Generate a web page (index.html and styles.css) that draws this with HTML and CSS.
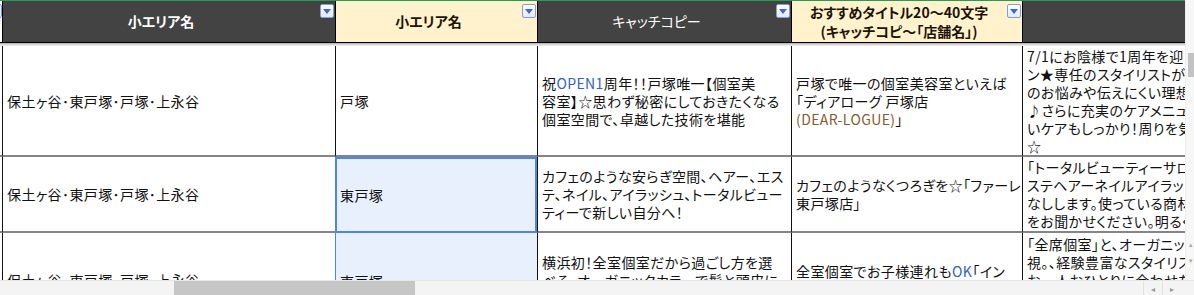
FILE: index.html
```html
<!DOCTYPE html>
<html lang="ja">
<head>
<meta charset="utf-8">
<title>小エリア一覧</title>
<link rel="stylesheet" href="styles.css">
</head>
<body>
<div class="app">
  <div class="main">
    <div class="viewport">
      <div class="strip">
        <div class="strip-cell"></div>
        <div class="strip-cell"><span class="ghost">ﾍﾟｰｼﾞ 設定 ｴﾘｱ</span></div>
        <div class="strip-cell"></div>
        <div class="strip-cell"></div>
        <div class="strip-cell"></div>
        <div class="strip-cell"></div>
      </div>
      <div class="green"></div>
      <div class="sheet">
        <div class="hd hd-edge"><span class="edge-btn"></span></div>
        <div class="hd hd-dark"><span class="hd-text bold">小エリア名</span><span class="dd"><svg viewBox="0 0 8 5" width="8" height="5"><path d="M0 0h8L4 5z" fill="#3d68d6"/></svg></span></div>
        <div class="hd hd-cream"><span class="hd-text bold">小エリア名</span><span class="dd"><svg viewBox="0 0 8 5" width="8" height="5"><path d="M0 0h8L4 5z" fill="#3d68d6"/></svg></span></div>
        <div class="hd hd-dark"><span class="hd-text">キャッチコピー</span><span class="dd"><svg viewBox="0 0 8 5" width="8" height="5"><path d="M0 0h8L4 5z" fill="#3d68d6"/></svg></span></div>
        <div class="hd hd-cream"><span class="hd-text bold">おすすめタイトル20～40文字<br>(キャッチコピ～「店舗名」)</span><span class="dd"><svg viewBox="0 0 8 5" width="8" height="5"><path d="M0 0h8L4 5z" fill="#3d68d6"/></svg></span></div>
        <div class="hd hd-dark"></div>

        <div class="freeze"></div>

        <div class="c edge"></div>
        <div class="c"><span class="t">保土ヶ谷･東戸塚･戸塚･上永谷</span></div>
        <div class="c"><span class="t">戸塚</span></div>
        <div class="c"><span class="t">祝<span class="blue">OPEN1</span>周年！！戸塚唯一【個室美<br>容室】☆思わず秘密にしておきたくなる<br>個室空間で、卓越した技術を堪能</span></div>
        <div class="c"><span class="t">戸塚で唯一の個室美容室といえば<br>「ディアローグ 戸塚店<br><span class="brown">(DEAR-LOGUE)</span>」</span></div>
        <div class="c"><span class="t">7/1にお陰様で1周年を迎えることができました<br>ン★専任のスタイリストが、お客様一人ひとり<br>のお悩みや伝えにくい理想のイメージを<br>♪さらに充実のケアメニューで、髪にやさし<br>いケアもしっかり！周りを気にせず過ごせる<br>☆</span></div>

        <div class="c edge"></div>
        <div class="c"><span class="t">保土ヶ谷･東戸塚･戸塚･上永谷</span></div>
        <div class="c active"><span class="t">東戸塚</span></div>
        <div class="c"><span class="t">カフェのような安らぎ空間、ヘアー、エス<br>テ、ネイル、アイラッシュ、トータルビュー<br>ティーで新しい自分へ！</span></div>
        <div class="c"><span class="t">カフェのようなくつろぎを☆「ファーレ<br>東戸塚店」</span></div>
        <div class="c"><span class="t">「トータルビューティーサロン」としてヘア、エ<br>ステヘアーネイルアイラッシュまで全てをおもて<br>なしします。使っている商材についてもお気軽に<br>をお聞かせください。明るく楽しいスタッフが</span></div>

        <div class="c edge"></div>
        <div class="c"><span class="t">保土ヶ谷･東戸塚･戸塚･上永谷</span></div>
        <div class="c range"><span class="t">東戸塚</span></div>
        <div class="c"><span class="t">横浜初！全室個室だから過ごし方を選<br>べる。オーガニックカラーで髪と頭皮に<br>やさしいヘアケアを</span></div>
        <div class="c"><span class="t">全室個室でお子様連れも<span class="blue">OK</span>「イン<br>ソムニア 東戸塚」</span></div>
        <div class="c"><span class="t">「全席個室」と、オーガニック素材を重<br>視。、経験豊富なスタイリストが丁寧に<br>お一人おひとりに合わせたスタイルを<br>ご提案いたします。お子様連れの方も<br>安心してご来店ください。</span></div>
      </div>
    </div>
    <div class="vscroll">
      <div class="vthumb"></div>
      <div class="varrows"><span>▴</span><span>▾</span></div>
    </div>
  </div>
  <div class="hscroll">
    <div class="htrack"><div class="hthumb"></div></div>
    <div class="harrows"><span class="ha">◂</span><span class="ha">▸</span></div>
  </div>
</div>
</body>
</html>
```

FILE: styles.css
```css
* { box-sizing: border-box; }
html, body { margin: 0; padding: 0; background: #fff; }
body {
  width: 1194px;
  height: 295px;
  overflow: hidden;
  font-family: "Noto Sans CJK JP", "Noto Sans", sans-serif;
  color: #111;
}
.app { display: flex; flex-direction: column; width: 1194px; height: 295px; }
.main { display: flex; height: 280px; overflow: hidden; }
.viewport { width: 1185px; overflow: hidden; display: flex; flex-direction: column; }

.strip {
  display: grid;
  grid-template-columns: 2px 333px 202px 254px 231px 163px;
  height: 4px;
  overflow: hidden;
}
.strip-cell { border-left: 1px solid #dcdcdc; overflow: hidden; }
.ghost {
  display: block;
  margin-top: -12px;
  padding-left: 24px;
  font-size: 14px;
  line-height: 16px;
  color: #c4c4c4;
  white-space: nowrap;
}
.green { height: 1px; background: #2a9a57; flex: none; }

.sheet {
  display: grid;
  grid-template-columns: 2px 333px 202px 254px 231px 163px;
  grid-template-rows: 42px 3px 111px 76px 96px;
}

.hd {
  display: flex;
  align-items: center;
  border-left: 1px solid #000;
  border-bottom: 1px solid #000;
  position: relative;
  padding-right: 16px;
}
.hd-edge { border-left: none; background: #fff; padding: 0; overflow: hidden; }
.edge-btn {
  position: absolute;
  left: -12px;
  top: 3px;
  width: 14px;
  height: 14px;
  border: 1px solid #7e9be0;
  border-radius: 2px;
  background: #e6edfb;
}
.hd-dark { background: #434343; color: #fff; }
.hd-cream { background: #fff2cc; color: #1d1408; }
.hd-text {
  flex: 1;
  text-align: center;
  font-size: 14px;
  line-height: 19px;
  white-space: nowrap;
  font-feature-settings: "palt";
}
.bold { font-weight: 700; }
.dd {
  position: absolute;
  right: 1px;
  top: 3px;
  width: 14px;
  height: 14px;
  border: 1px solid #7f9de2;
  border-radius: 2px;
  background: linear-gradient(#ffffff, #e3eafa);
  display: flex;
  align-items: center;
  justify-content: center;
  padding-top: 1px;
}
.dd svg { display: block; }

.freeze {
  grid-column: 1 / -1;
  background: linear-gradient(#b9b9b9 0 1px, #d6d6d6 1px 2px, #e9e9e9 2px);
}

.c {
  display: flex;
  align-items: center;
  border-left: 1px solid #111;
  border-bottom: 2px solid #858585;
  padding: 0 4px;
  overflow: hidden;
  background: #fff;
}
.t {
  display: block;
  font-size: 14px;
  line-height: 18px;
  letter-spacing: 0.4px;
  white-space: nowrap;
  font-feature-settings: "palt";
}
.c.edge { border-left: none; padding: 0; }
.c.active {
  background: #e8f0fe;
  border: 2px solid #4a88ee;
  padding-left: 3px;
}
.c.range {
  background: #e8f0fe;
  border-left: 1px solid #4a88ee;
  border-bottom: none;
}
.blue { color: #2f62c8; }
.brown { color: #8a5a2c; }

.vscroll {
  width: 9px;
  background: #f7f7f7;
  position: relative;
  border-left: 1px solid #ededed;
}
.vthumb {
  margin-top: 53px;
  margin-left: 2px;
  width: 6px;
  height: 24px;
  background: #c3c3c3;
}
.varrows {
  position: absolute;
  top: 240px;
  left: 0;
  width: 9px;
  display: flex;
  flex-direction: column;
  align-items: center;
  gap: 8px;
  font-size: 7px;
  line-height: 8px;
  color: #a8a8a8;
}

.hscroll {
  height: 15px;
  display: flex;
  background: #f4f4f4;
  border-top: 1px solid #e6e6e6;
}
.htrack { flex: 1; }
.hthumb {
  margin-left: 174px;
  width: 241px;
  height: 14px;
  background: #c6c6c6;
}
.harrows { display: flex; width: 38px; margin-right: 13px; }
.ha {
  flex: 1;
  display: flex;
  align-items: center;
  justify-content: center;
  font-size: 8px;
  color: #999;
  border-left: 1px solid #e2e2e2;
}
```
